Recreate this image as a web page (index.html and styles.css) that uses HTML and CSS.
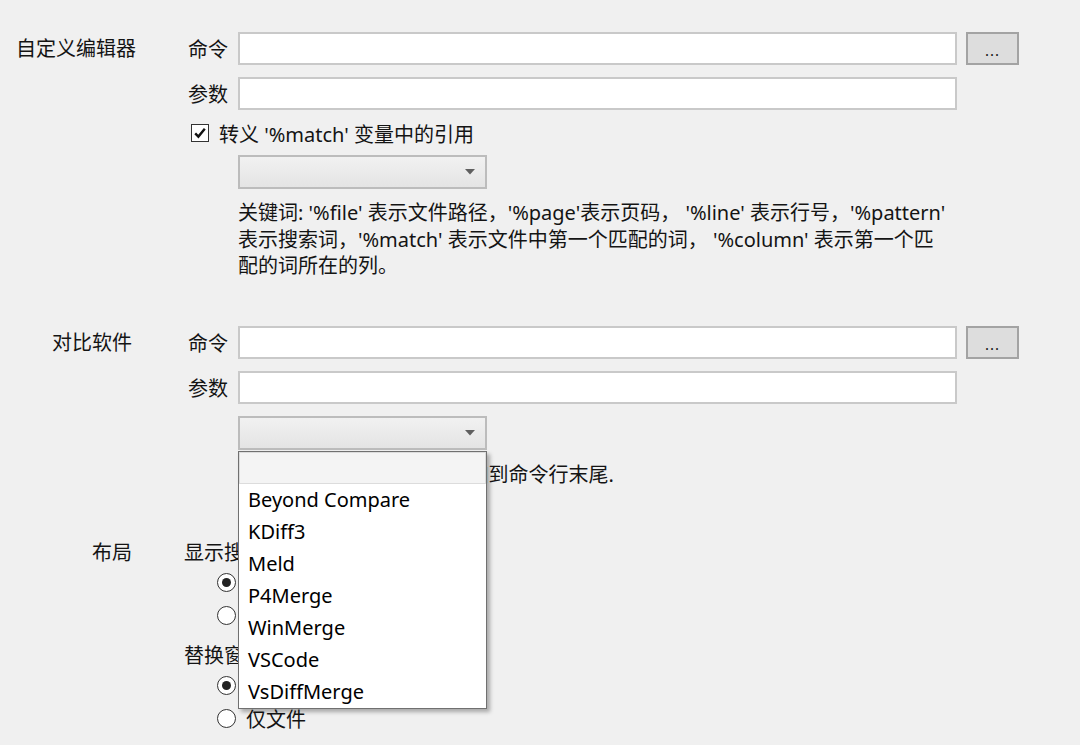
FILE: index.html
```html
<!DOCTYPE html>
<html lang="zh-CN">
<head>
    <meta charset="UTF-8">
    <meta name="viewport" content="width=device-width, initial-scale=1.0">
    <title>设置</title>
    <link rel="stylesheet" href="styles.css">
</head>
<body>
    <div class="settings">
        <!-- custom editor -->
        <section class="group">
            <div class="group-label">自定义编辑器</div>
            <div class="group-body">
                <div class="field-row">
                    <label class="field-label">命令</label>
                    <input class="text-input" type="text">
                    <button class="browse-btn">...</button>
                </div>
                <div class="field-row">
                    <label class="field-label">参数</label>
                    <input class="text-input" type="text">
                </div>
                <label class="check-row">
                    <span class="checkbox">
                        <svg width="16" height="16" viewBox="0 0 16 16"><path d="M3.2 8.4 L6.4 11.6 L12.8 3.8" fill="none" stroke="#111" stroke-width="2.4"/></svg>
                    </span>
                    转义 '%match' 变量中的引用
                </label>
                <div class="combo-wrap">
                    <div class="combo">
                        <svg width="10" height="6" viewBox="0 0 10 6"><polygon points="0,0 10,0 5,5.5" fill="#5f5f5f"/></svg>
                    </div>
                </div>
                <p class="hint">关键词: '%file' 表示文件路径，'%page'表示页码， '%line' 表示行号，'%pattern'<br>表示搜索词，'%match' 表示文件中第一个匹配的词， '%column' 表示第一个匹<br>配的词所在的列。</p>
            </div>
        </section>

        <!-- diff tool -->
        <section class="group group-diff">
            <div class="group-label">对比软件</div>
            <div class="group-body">
                <div class="field-row">
                    <label class="field-label">命令</label>
                    <input class="text-input" type="text">
                    <button class="browse-btn">...</button>
                </div>
                <div class="field-row">
                    <label class="field-label">参数</label>
                    <input class="text-input" type="text">
                </div>
                <div class="combo-wrap">
                    <div class="combo">
                        <svg width="10" height="6" viewBox="0 0 10 6"><polygon points="0,0 10,0 5,5.5" fill="#5f5f5f"/></svg>
                    </div>
                    <ul class="combo-popup">
                        <li class="popup-item selected"></li>
                        <li class="popup-item">Beyond Compare</li>
                        <li class="popup-item">KDiff3</li>
                        <li class="popup-item">Meld</li>
                        <li class="popup-item">P4Merge</li>
                        <li class="popup-item">WinMerge</li>
                        <li class="popup-item">VSCode</li>
                        <li class="popup-item">VsDiffMerge</li>
                    </ul>
                </div>
                <p class="hint hint-diff">若参数为空, 则文件将被添加到命令行末尾.</p>
            </div>
        </section>

        <!-- layout -->
        <section class="group group-layout">
            <div class="group-label">布局</div>
            <div class="group-body">
                <div class="sub-heading">显示搜索结果</div>
                <div class="radio-row"><span class="radio checked"></span></div>
                <div class="radio-row"><span class="radio"></span></div>
                <div class="sub-heading sub-heading-2">替换窗口</div>
                <div class="radio-row"><span class="radio checked"></span></div>
                <label class="radio-row"><span class="radio"></span>仅文件</label>
            </div>
        </section>
    </div>
</body>
</html>
```

FILE: styles.css
```css
body {
    margin: 0;
    background-color: #f0f0f0;
    font-family: "Noto Sans", "Noto Sans CJK SC", sans-serif;
    font-size: 20px;
    color: #141414;
    overflow: hidden;
}

.settings {
    padding: 32px 0 0 16px;
}

.group {
    display: flex;
    align-items: flex-start;
}

.group-diff {
    margin-top: 46px;
}

.group-layout {
    margin-top: 52px;
}

.group-label {
    width: 118px;
    flex-shrink: 0;
    box-sizing: border-box;
    padding-right: 2px;
    text-align: right;
    line-height: 33px;
    white-space: nowrap;
}

.group-layout .group-label {
    line-height: 26px;
}

.group-body {
    display: flex;
    flex-direction: column;
}

.field-row {
    display: flex;
    align-items: center;
    height: 33px;
}

.field-row + .field-row {
    margin-top: 12px;
}

.field-label {
    width: 94px;
    margin-right: 10px;
    text-align: right;
    white-space: nowrap;
}

.text-input {
    width: 719px;
    height: 33px;
    box-sizing: border-box;
    border: 2px solid #c9c9c9;
    background: #fff;
    margin: 0;
    padding: 0 4px;
    outline: none;
}

.browse-btn {
    width: 53px;
    height: 33px;
    margin-left: 9px;
    box-sizing: border-box;
    border: 2px solid #a3a3a3;
    background: #dddddd;
    font-family: inherit;
    font-size: 15px;
    color: #141414;
    padding: 3px 0 0;
    letter-spacing: 1px;
}

.check-row {
    display: flex;
    align-items: center;
    height: 24px;
    margin: 11px 0 0 57px;
    white-space: nowrap;
}

.checkbox {
    width: 18px;
    height: 18px;
    box-sizing: border-box;
    border: 1px solid #333;
    background: #fff;
    margin-right: 10px;
    display: flex;
    align-items: center;
    justify-content: center;
}

.combo-wrap {
    position: relative;
    margin: 10px 0 0 104px;
    width: 249px;
}

.group-diff .combo-wrap {
    margin-top: 12px;
}

.combo {
    height: 34px;
    box-sizing: border-box;
    border: 2px solid #bcbcbc;
    background: linear-gradient(#f1f1f1, #e4e4e4);
    display: flex;
    align-items: center;
    justify-content: flex-end;
    padding-right: 10px;
}

.combo-popup {
    position: absolute;
    top: 35px;
    left: 0;
    width: 249px;
    box-sizing: border-box;
    margin: 0;
    padding: 0;
    list-style: none;
    background: #fff;
    border: 1px solid #707070;
    box-shadow: 3px 3px 4px rgba(0, 0, 0, 0.3);
    z-index: 10;
}

.popup-item {
    height: 32px;
    line-height: 32px;
    padding-left: 9px;
    font-size: 20px;
    color: #000;
    white-space: nowrap;
}

.popup-item.selected {
    box-sizing: border-box;
    border: 1px solid #dcdcdc;
    background: #f4f4f4;
}

.hint {
    margin: 11px 0 0 104px;
    font-size: 20px;
    line-height: 26.5px;
    white-space: nowrap;
}

.hint-diff {
    margin-top: 12px;
}

.sub-heading {
    line-height: 26px;
    margin-left: 50px;
    white-space: nowrap;
}

.sub-heading-2 {
    margin-top: 11px;
}

.radio-row {
    display: flex;
    align-items: center;
    height: 33px;
    margin-left: 83px;
    white-space: nowrap;
}

.radio {
    width: 19px;
    height: 19px;
    box-sizing: border-box;
    border: 1.5px solid #333;
    border-radius: 50%;
    background: #fff;
    margin-right: 10px;
    display: flex;
    align-items: center;
    justify-content: center;
}

.radio.checked::after {
    content: "";
    width: 9px;
    height: 9px;
    border-radius: 50%;
    background: #222;
}
```
